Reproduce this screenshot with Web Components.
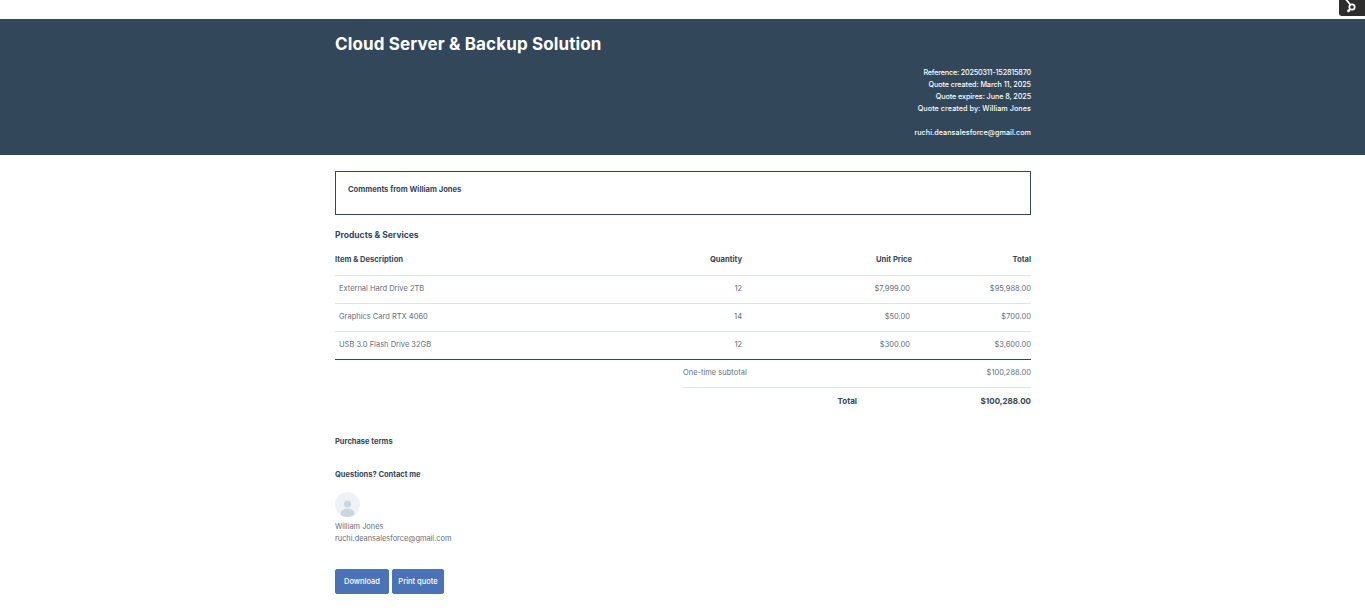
<!DOCTYPE html>
<html>
<head>
<meta charset="utf-8">
<title>Cloud Server & Backup Solution</title>
<style>
  html, body { margin: 0; padding: 0; background: #fff; }
  body { font-family: Inter, "Liberation Sans", sans-serif; color: #33475b; height: 612px; overflow: hidden; }
</style>
</head>
<body>
<quote-badge></quote-badge>
<quote-header title="Cloud Server &amp; Backup Solution">
  <div style="letter-spacing: -.17px">Reference: 20250311-152815870</div>
  <div style="letter-spacing: -.07px">Quote created: March 11, 2025</div>
  <div style="letter-spacing: -.07px">Quote expires: June 8, 2025</div>
  <div style="letter-spacing: .07px">Quote created by: William Jones</div>
  <div>&nbsp;</div>
  <div style="letter-spacing: .05px">ruchi.deansalesforce@gmail.com</div>
</quote-header>
<quote-body>
  <quote-comments>Comments from William Jones</quote-comments>
  <quote-table></quote-table>
  <quote-contact></quote-contact>
  <quote-actions></quote-actions>
</quote-body>

<script>
// little dark tab in the top right corner
class QuoteBadge extends HTMLElement {
  constructor() {
    super();
    this.attachShadow({ mode: 'open' }).innerHTML = `
    <style>
      :host { display: flex; justify-content: flex-end; height: 19px; }
      .tab {
        width: 26px; height: 16px; background: #2d2d2d; border-radius: 0 0 0 3px;
        display: flex; justify-content: center; overflow: hidden;
      }
    </style>
    <div class="tab">
      <svg width="16" height="16" viewBox="0 0 16 16" fill="none" stroke="#fff" stroke-width="1.7">
        <circle cx="8" cy="7" r="2.7"/>
        <path d="M6.4 4.8L2 -0.5"/>
        <path d="M6.2 9.2L4.8 10.6"/>
        <circle cx="4.5" cy="10.9" r="1.4" fill="#fff" stroke="none"/>
      </svg>
    </div>`;
  }
}

class QuoteHeader extends HTMLElement {
  constructor() {
    super();
    this.attachShadow({ mode: 'open' }).innerHTML = `
    <style>
      :host { display: block; background: #33475b; height: 136px; color: #fff; }
      .wrap { width: 696px; margin-left: 335px; padding-top: 14px; }
      h1 { margin: 0; font-size: 17px; line-height: 22px; font-weight: 700; letter-spacing: 0.13px; }
      .meta { margin-top: 12px; text-align: right; font-size: 7.2px; line-height: 12px; font-weight: 500; }
    </style>
    <div class="wrap">
      <h1></h1>
      <div class="meta"><slot></slot></div>
    </div>`;
    this.shadowRoot.querySelector('h1').textContent = this.getAttribute('title');
  }
}

class QuoteBody extends HTMLElement {
  constructor() {
    super();
    this.attachShadow({ mode: 'open' }).innerHTML = `
    <style>
      :host { display: block; width: 696px; margin-left: 335px; padding-top: 16px; }
    </style>
    <slot></slot>`;
  }
}

class QuoteComments extends HTMLElement {
  constructor() {
    super();
    this.attachShadow({ mode: 'open' }).innerHTML = `
    <style>
      :host {
        display: block; box-sizing: border-box; height: 44px; border: 1px solid #33475b;
        padding: 12px 12px 0; font-size: 7.6px; line-height: 12px; font-weight: 700;
      }
    </style>
    <slot></slot>`;
  }
}

const ITEMS = [
  ['External Hard Drive 2TB', '12', '$7,999.00', '$95,988.00'],
  ['Graphics Card RTX 4060', '14', '$50.00', '$700.00'],
  ['USB 3.0 Flash Drive 32GB', '12', '$300.00', '$3,600.00']
];

class QuoteTable extends HTMLElement {
  constructor() {
    super();
    const rows = ITEMS.map((r) => `
      <div class="row item">
        <span class="name">${r[0]}</span>
        <span class="num">${r[1]}</span>
        <span class="price">${r[2]}</span>
        <span class="num">${r[3]}</span>
      </div>`).join('');
    this.attachShadow({ mode: 'open' }).innerHTML = `
    <style>
      :host { display: block; }
      h2 { margin: 14px 0 0; font-size: 8.5px; line-height: 12px; font-weight: 700; }
      .row {
        display: grid; grid-template-columns: 317px 90px 170px 119px; align-items: center;
        text-align: right;
      }
      .head { height: 35px; font-size: 7.6px; font-weight: 700; border-bottom: 1px solid #dfe3eb; box-sizing: border-box; padding-top: 2px; }
      .head span:first-child { text-align: left; }
      .item { height: 28px; box-sizing: border-box; padding-bottom: 2px; border-bottom: 1px solid #dfe3eb; font-size: 7.5px; color: #5f6f80; }
      .item:nth-of-type(4) { border-bottom-color: #33475b; }
      .name { text-align: left; padding-left: 4px; }
      .price { padding-right: 2px; }
      .sums { margin-left: 348px; }
      .sub { display: flex; justify-content: space-between; align-items: center; height: 28px; box-sizing: border-box;
        padding-bottom: 2px; border-bottom: 1px solid #dfe3eb; font-size: 7.5px; color: #5f6f80; }
      .grand { display: grid; grid-template-columns: 174px 1fr; align-items: center; height: 27px; padding-bottom: 2px; box-sizing: border-box; font-weight: 700; text-align: right; }
      .grand .l { font-size: 8px; }
      .grand .v { font-size: 8px; }
    </style>
    <h2>Products &amp; Services</h2>
    <div class="row head">
      <span>Item &amp; Description</span><span>Quantity</span><span>Unit Price</span><span>Total</span>
    </div>
    ${rows}
    <div class="sums">
      <div class="sub"><span>One-time subtotal</span><span>$100,288.00</span></div>
      <div class="grand"><span class="l">Total</span><span class="v">$100,288.00</span></div>
    </div>`;
  }
}

class QuoteContact extends HTMLElement {
  constructor() {
    super();
    this.attachShadow({ mode: 'open' }).innerHTML = `
    <style>
      :host { display: block; }
      h3 { margin: 0; font-size: 7.5px; line-height: 12px; font-weight: 700; }
      .terms { margin-top: 21px; }
      .ask { margin-top: 21px; }
      svg { display: block; margin-top: 11px; }
      .who { margin-top: 4px; font-size: 7.4px; line-height: 12px; color: #5f6f80; }
    </style>
    <h3 class="terms">Purchase terms</h3>
    <h3 class="ask">Questions? Contact me</h3>
    <svg width="25" height="25" viewBox="0 0 25 25">
      <defs><clipPath id="c"><circle cx="12.5" cy="12.5" r="12.5"/></clipPath></defs>
      <circle cx="12.5" cy="12.5" r="12.5" fill="#eef2f6"/>
      <g clip-path="url(#c)" fill="#cbd6e2">
        <circle cx="12.5" cy="12" r="3.6"/>
        <ellipse cx="12.5" cy="22" rx="7" ry="5.5"/>
      </g>
    </svg>
    <div class="who">William Jones<br>ruchi.deansalesforce@gmail.com</div>`;
  }
}

class QuoteActions extends HTMLElement {
  constructor() {
    super();
    this.attachShadow({ mode: 'open' }).innerHTML = `
    <style>
      :host { display: flex; gap: 3px; margin-top: 24px; }
      button {
        height: 25px; border: 1px solid #4a74b4; border-radius: 2px; background: #4a73b5; color: #fff;
        font: 500 7.5px Inter, "Liberation Sans", sans-serif; padding: 0;
      }
      .dl { width: 54px; }
      .pr { width: 52px; }
    </style>
    <button class="dl">Download</button>
    <button class="pr">Print quote</button>`;
  }
}

customElements.define('quote-badge', QuoteBadge);
customElements.define('quote-header', QuoteHeader);
customElements.define('quote-body', QuoteBody);
customElements.define('quote-comments', QuoteComments);
customElements.define('quote-table', QuoteTable);
customElements.define('quote-contact', QuoteContact);
customElements.define('quote-actions', QuoteActions);
</script>
</body>
</html>
